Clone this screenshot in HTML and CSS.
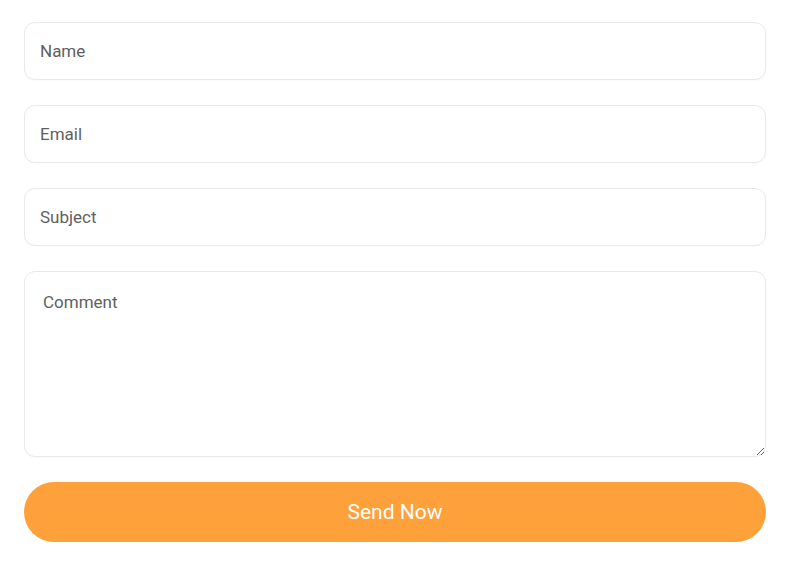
FILE: index.html
```html
<!DOCTYPE html>
<html lang="en">
<head>
    <meta charset="UTF-8">
    <meta name="viewport" content="width=device-width, initial-scale=1.0">
    <title>Contact</title>
    <link rel="stylesheet" href="styles.css">
</head>
<body>
    <form class="contact-form">
        <input type="text" class="field" placeholder="Name">
        <input type="email" class="field" placeholder="Email">
        <input type="text" class="field" placeholder="Subject">
        <textarea class="field comment" placeholder="Comment"></textarea>
        <button type="button" class="send-button">Send Now</button>
    </form>
</body>
</html>
```
FILE: styles.css
```css
body {
    font-family: Roboto, "Liberation Sans", Arial, sans-serif;
    margin: 0;
    padding: 0;
    background: #fff;
}

.contact-form {
    display: flex;
    flex-direction: column;
    gap: 25px;
    padding: 22px 34px 0 24px;
}

.field {
    display: block;
    box-sizing: border-box;
    width: 100%;
    height: 58px;
    padding: 0 15px;
    border: 1px solid #e9e9e9;
    border-radius: 11px;
    background: #fff;
    font-family: inherit;
    font-size: 17px;
    color: #555;
    outline: none;
    box-shadow: 0 1px 2px rgba(0, 0, 0, 0.02);
}

.field::placeholder {
    color: #5f5f5f;
}

/* Comment box */
.comment {
    height: 186px;
    padding: 20px 18px;
    resize: vertical;
}

.send-button {
    height: 60px;
    border: none;
    border-radius: 30px;
    background-color: #fea13b;
    color: #fff;
    font-family: inherit;
    font-size: 21px;
    cursor: pointer;
}
```
